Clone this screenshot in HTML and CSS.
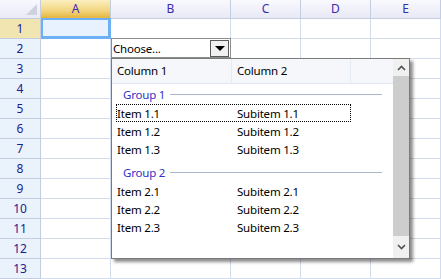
FILE: index.html
```html
<!doctype html>
<html>
<head>
    <meta charset="utf-8"/>
    <title>Sheet</title>
    <link rel="stylesheet" href="styles.css">
</head>
<body>
    <div class="sheet">
        <div class="corner"><span class="corner-mark"></span></div>
        <div class="colhdr active">A</div>
        <div class="colhdr">B</div>
        <div class="colhdr">C</div>
        <div class="colhdr">D</div>
        <div class="colhdr">E</div>

        <div class="rowhdr active">1</div>
        <div class="cell selected"></div><div class="cell"></div><div class="cell"></div><div class="cell"></div><div class="cell"></div>

        <div class="rowhdr">2</div>
        <div class="cell"></div>
        <div class="cell combo-cell">
            <div class="combo">
                <span class="combo-text">Choose...</span>
                <span class="combo-btn"><span class="tri"></span></span>
            </div>
            <div class="popup">
                <div class="list">
                    <div class="list-head">
                        <div class="head-cell c1">Column 1</div>
                        <div class="head-cell c2">Column 2</div>
                        <div class="head-fill"></div>
                    </div>
                    <div class="group">
                        <span class="group-name">Group 1</span><span class="group-line"></span>
                    </div>
                    <div class="item focus"><span class="c1">Item 1.1</span><span class="c2">Subitem 1.1</span></div>
                    <div class="item"><span class="c1">Item 1.2</span><span class="c2">Subitem 1.2</span></div>
                    <div class="item"><span class="c1">Item 1.3</span><span class="c2">Subitem 1.3</span></div>
                    <div class="group next">
                        <span class="group-name">Group 2</span><span class="group-line"></span>
                    </div>
                    <div class="item"><span class="c1">Item 2.1</span><span class="c2">Subitem 2.1</span></div>
                    <div class="item"><span class="c1">Item 2.2</span><span class="c2">Subitem 2.2</span></div>
                    <div class="item"><span class="c1">Item 2.3</span><span class="c2">Subitem 2.3</span></div>
                </div>
                <div class="scrollbar">
                    <div class="arrow up">
                        <svg width="9" height="6" viewBox="0 0 9 6"><path d="M1 5 L4.5 1.5 L8 5" fill="none" stroke="#505050" stroke-width="1.6"/></svg>
                    </div>
                    <div class="thumb"></div>
                    <div class="arrow down">
                        <svg width="9" height="6" viewBox="0 0 9 6"><path d="M1 1 L4.5 4.5 L8 1" fill="none" stroke="#505050" stroke-width="1.6"/></svg>
                    </div>
                </div>
            </div>
        </div>
        <div class="cell"></div><div class="cell"></div><div class="cell"></div>

        <div class="rowhdr">3</div><div class="cell"></div><div class="cell"></div><div class="cell"></div><div class="cell"></div><div class="cell"></div>
        <div class="rowhdr">4</div><div class="cell"></div><div class="cell"></div><div class="cell"></div><div class="cell"></div><div class="cell"></div>
        <div class="rowhdr">5</div><div class="cell"></div><div class="cell"></div><div class="cell"></div><div class="cell"></div><div class="cell"></div>
        <div class="rowhdr">6</div><div class="cell"></div><div class="cell"></div><div class="cell"></div><div class="cell"></div><div class="cell"></div>
        <div class="rowhdr">7</div><div class="cell"></div><div class="cell"></div><div class="cell"></div><div class="cell"></div><div class="cell"></div>
        <div class="rowhdr">8</div><div class="cell"></div><div class="cell"></div><div class="cell"></div><div class="cell"></div><div class="cell"></div>
        <div class="rowhdr">9</div><div class="cell"></div><div class="cell"></div><div class="cell"></div><div class="cell"></div><div class="cell"></div>
        <div class="rowhdr">10</div><div class="cell"></div><div class="cell"></div><div class="cell"></div><div class="cell"></div><div class="cell"></div>
        <div class="rowhdr">11</div><div class="cell"></div><div class="cell"></div><div class="cell"></div><div class="cell"></div><div class="cell"></div>
        <div class="rowhdr">12</div><div class="cell"></div><div class="cell"></div><div class="cell"></div><div class="cell"></div><div class="cell"></div>
        <div class="rowhdr">13</div><div class="cell"></div><div class="cell"></div><div class="cell"></div><div class="cell"></div><div class="cell"></div>
    </div>
</body>
</html>
```
FILE: styles.css
```css
* {
    box-sizing:border-box;
}
html, body {
    margin:0;
    padding:0;
    background:#ffffff;
}
body {
    font-family:"Open Sans","Noto Sans",sans-serif;
    font-size:12px;
    color:#000000;
    overflow:hidden;
}

.sheet {
    display:grid;
    grid-template-columns:41px 70px 120px 70px 70px 70px;
    grid-template-rows:19px repeat(13, 20px);
    width:441px;
}

.corner {
    background:linear-gradient(#f8f8fe, #e8eaf6);
    border-right:1px solid #c4cee0;
    border-bottom:1px solid #c4cee0;
    display:flex;
    align-items:flex-end;
    justify-content:flex-end;
    padding:0 3px 3px 0;
}
.corner-mark {
    width:0;
    height:0;
    border-left:11px solid transparent;
    border-bottom:11px solid #cfd2dc;
}

.colhdr {
    background:linear-gradient(#f9f9fe, #e8e9f6);
    border-right:1px solid #c4cee0;
    border-bottom:1px solid #c4cee0;
    color:#3a2cb0;
    text-align:center;
    line-height:18px;
    font-family:"Noto Sans",sans-serif;
    font-size:12px;
}
.colhdr.active {
    background:linear-gradient(#fbeebf, #f2d57e 60%, #e4b43c);
    border-bottom-color:#d8a838;
}

.rowhdr {
    background:#eaf2fc;
    border-right:1px solid #c4cee0;
    border-bottom:1px solid #c4cee0;
    color:#1c1c90;
    text-align:center;
    line-height:19px;
    font-family:"Noto Sans",sans-serif;
    font-size:12px;
}
.rowhdr.active {
    background:#f1e6b2;
}

.cell {
    border-right:1px solid #d2dcec;
    border-bottom:1px solid #d2dcec;
}
.cell.selected {
    background:#e8f2fe;
    box-shadow:inset 0 0 0 2px #6db0f4;
    margin:-1px 0 0 0;
    border-color:#6db0f4;
}

.combo-cell {
    position:relative;
    border:none;
}
.combo {
    height:20px;
    margin-top:-1px;
    border:1px solid #8c8c8c;
    display:flex;
    align-items:center;
    padding:0 1px 0 1px;
    background:#ffffff;
}
.combo-text {
    flex:1;
    font-family:"Noto Sans",sans-serif;
    font-size:11.5px;
    letter-spacing:-0.2px;
}
.combo-btn {
    width:19px;
    height:17px;
    border:1px solid #5a5a5a;
    background:#f0f0f0;
    display:flex;
    align-items:center;
    justify-content:center;
}
.tri {
    width:0;
    height:0;
    border-left:5px solid transparent;
    border-right:5px solid transparent;
    border-top:5px solid #000000;
}

.popup {
    position:absolute;
    left:0;
    top:19px;
    width:299px;
    height:201px;
    border:1px solid #7a7a7a;
    background:#ffffff;
    box-shadow:3px 3px 3px rgba(0,0,0,0.45);
    display:flex;
    z-index:2;
}
.list {
    flex:1;
    font-family:"Noto Sans",sans-serif;
    font-size:11.5px;
    letter-spacing:-0.2px;
}
.list-head {
    display:flex;
    height:25px;
    border-bottom:1px solid #dfe7f2;
}
.head-cell, .head-fill {
    background:#f5f7fa;
    border-right:1px solid #e4ebf4;
    line-height:24px;
    padding-left:5px;
}
.head-cell.c1 { width:120px; }
.head-cell.c2 { width:119px; }
.head-fill { flex:1; border-right:none; }

.group {
    display:flex;
    align-items:center;
    height:20px;
    padding:0 11px 0 11px;
    color:#3232c4;
}
.group.next {
    margin-top:4px;
}
.group-name {
    padding-right:5px;
}
.group-line {
    flex:1;
    height:1px;
    background:#a8b6cc;
}

.item {
    display:flex;
    height:18px;
    line-height:17px;
    margin:0 42px 0 4px;
    border:1px dotted transparent;
}
.item.focus {
    border-color:#000000;
}
.item .c1 {
    width:120px;
}
.item .c2 {
    flex:1;
}

.scrollbar {
    width:16px;
    display:flex;
    flex-direction:column;
    background:#f0f0f0;
}
.arrow {
    height:17px;
    display:flex;
    align-items:center;
    justify-content:center;
}
.arrow.down {
    height:22px;
}
.thumb {
    flex:1;
    background:#cdcdcd;
}
```
